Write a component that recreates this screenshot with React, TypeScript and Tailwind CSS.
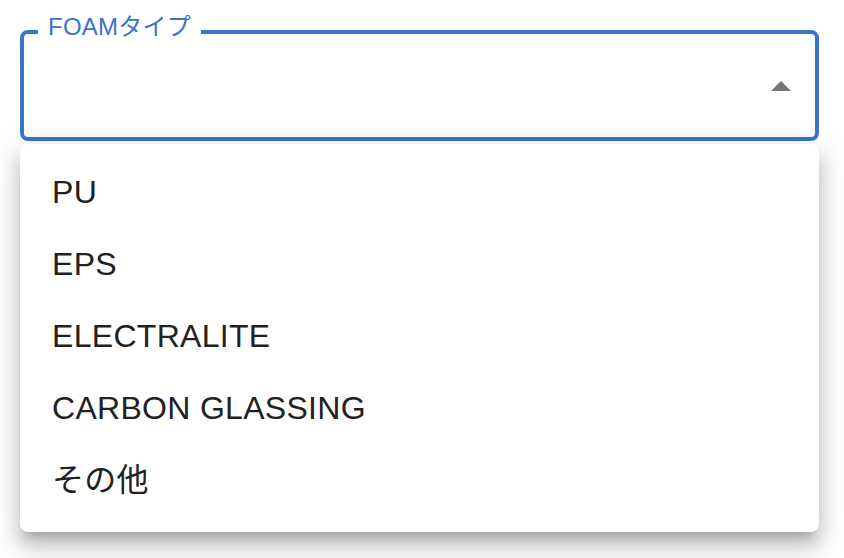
const options = ["PU", "EPS", "ELECTRALITE", "CARBON GLASSING", "その他"];

export default function App() {
  return (
    <div className="min-h-[558px] w-[844px] bg-white pt-[30px] font-['Liberation_Sans','Noto_Sans_CJK_JP',sans-serif]">
      {/* Select field (focused, open) */}
      <div className="relative ml-5 flex h-[111px] w-[799px] items-center justify-end rounded-lg border-4 border-[#3a74c9] pr-6">
        <span className="absolute left-[14px] top-[-19px] bg-white px-[10px] text-[24px] leading-6 tracking-[0.22px] text-[#3a74c9]">
          FOAMタイプ
        </span>
        <svg width="20" height="10" viewBox="0 0 20 10" className="mt-[1px]">
          <path d="M0 10 L10 0 L20 10 Z" fill="#757575" />
        </svg>
      </div>

      {/* Dropdown menu */}
      <ul className="relative z-10 ml-5 mt-[3px] w-[799px] rounded-lg bg-white pb-4 pt-3 shadow-[0_10px_10px_-6px_rgba(0,0,0,0.2),0_16px_20px_2px_rgba(0,0,0,0.14),0_6px_28px_4px_rgba(0,0,0,0.12)]">
        {options.map((o) => (
          <li key={o} className="flex h-[72px] items-center px-8 text-[32px] tracking-[0.3px] text-[#212121]">
            {o}
          </li>
        ))}
      </ul>
    </div>
  );
}
